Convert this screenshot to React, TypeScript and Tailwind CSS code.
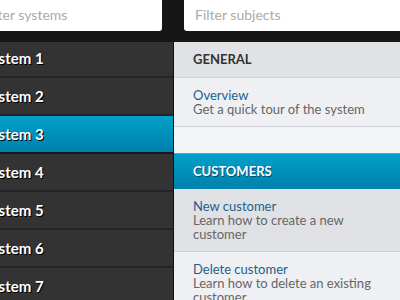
const systems = ['System 1', 'System 2', 'System 3', 'System 4', 'System 5', 'System 6', 'System 7'];

type Subject = { title: string; desc: string };

const general: Subject[] = [{ title: 'Overview', desc: 'Get a quick tour of the system' }];
const customers: Subject[] = [
  { title: 'New customer', desc: 'Learn how to create a new customer' },
  { title: 'Delete customer', desc: 'Learn how to delete an existing customer' },
];

function SubjectItem({ item, active }: { item: Subject; active?: boolean }) {
  return (
    <div
      className={`border-b border-[#cfd1d6] pl-[19px] pr-3 pt-[10px] pb-[10px] leading-[14px] text-[13px] ${
        active ? 'bg-[#dfe1e5]' : 'bg-[#eef0f3]'
      }`}
    >
      <div className="text-[#1d5f8c]">{item.title}</div>
      <div className="text-[#666]">{item.desc}</div>
    </div>
  );
}

export default function App() {
  const selected = 2;
  return (
    <div className="w-[400px] h-[300px] overflow-hidden flex flex-col bg-[#333] font-['Lato','Liberation_Sans',sans-serif]">
      {/* search bar */}
      <div className="relative z-10 h-[42px] shrink-0 bg-[#161616] flex items-start gap-[22px]">
        <div className="w-[191px] -ml-[29px] shrink-0">
          <input
            className="w-full h-[33px] -mt-[2px] bg-white rounded-[3px] pl-[12px] text-[14px] outline-none placeholder:text-[#aaa]"
            placeholder="Filter systems"
          />
        </div>
        <div className="flex-1 -mr-[10px]">
          <input
            className="w-full h-[33px] -mt-[2px] bg-white rounded-[3px] pl-[11px] text-[14px] outline-none placeholder:text-[#aaa]"
            placeholder="Filter subjects"
          />
        </div>
      </div>

      <div className="flex flex-1 min-h-0">
        {/* systems */}
        <div className="w-[174px] shrink-0 border-r border-[#111] -mt-[2px]">
          {systems.map((s, i) => (
            <div
              key={s}
              className={`h-[38px] flex items-center border-b-2 text-[15px] font-bold text-white [text-shadow:1px_1px_0_#000] ${
                i === selected
                  ? 'bg-gradient-to-b from-[#00a1c9] to-[#0080ad] border-[#1a1a1a]'
                  : 'bg-[#333] border-[#242424]'
              }`}
            >
              <span className="-ml-[17px]">{s}</span>
            </div>
          ))}
        </div>

        {/* subjects */}
        <div className="flex-1 bg-[#f4f5f7]">
          <div className="h-[36px] flex items-center pl-[19px] bg-[#e1e2e6] border-b border-[#cfd1d6] text-[13px] font-bold text-[#333]">
            GENERAL
          </div>
          {general.map((g) => (
            <SubjectItem key={g.title} item={g} />
          ))}
          <div className="h-[26px]" />
          <div className="h-[36px] flex items-center pl-[19px] bg-gradient-to-b from-[#00a1c9] to-[#0080ad] border-t border-[#33b4d6] text-[13px] font-bold text-white [text-shadow:1px_1px_0_#00506e]">
            CUSTOMERS
          </div>
          {customers.map((c, i) => (
            <SubjectItem key={c.title} item={c} active={i === 0} />
          ))}
        </div>
      </div>
    </div>
  );
}
